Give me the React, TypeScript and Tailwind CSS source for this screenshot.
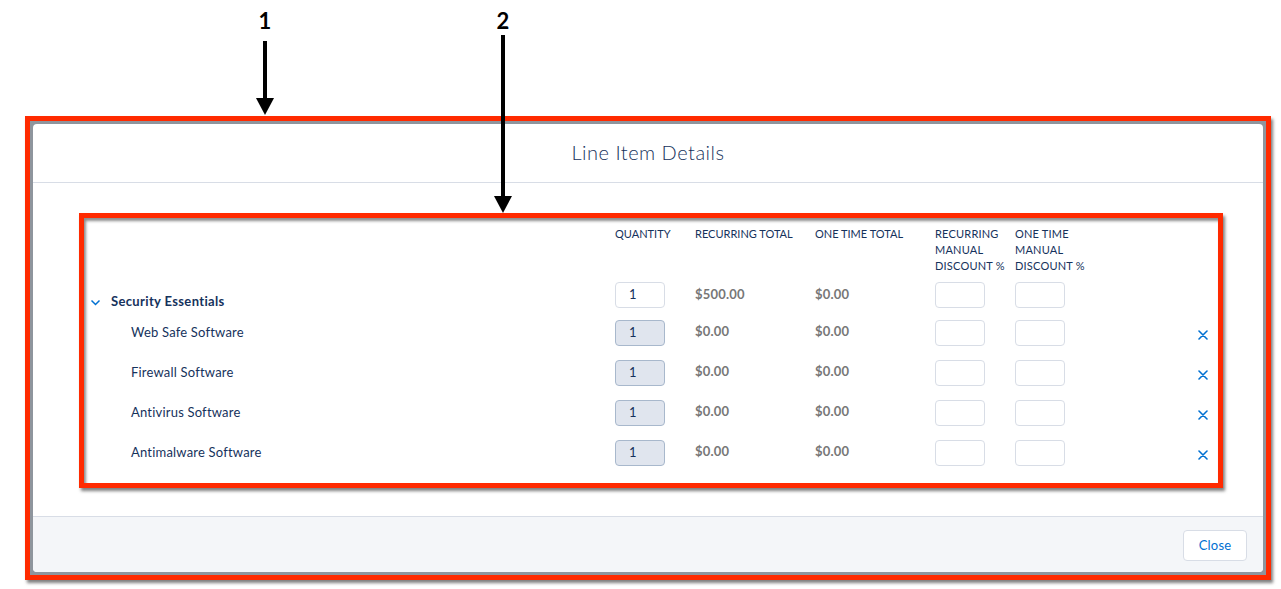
import React from 'react';

const rows = [
  { name: 'Web Safe Software' },
  { name: 'Firewall Software' },
  { name: 'Antivirus Software' },
  { name: 'Antimalware Software' },
];

const Box = ({ children, filled }: { children?: React.ReactNode; filled?: boolean }) => (
  <div
    className={
      filled
        ? 'w-[50px] h-[26px] rounded-[4px] border border-[#a8b8cc] bg-[#e0e5ee] text-[#16325c] text-[13px] pl-[13px] flex items-center'
        : 'w-[50px] h-[26px] rounded-[4px] border border-[#d8dde6] bg-white text-[#16325c] text-[13px] pl-[13px] flex items-center'
    }
  >
    {children}
  </div>
);

const Arrow = ({ height }: { height: number }) => (
  <div className="flex flex-col items-center">
    <div className="w-[4px] bg-black" style={{ height }} />
    <div className="w-0 h-0 border-l-[9px] border-r-[9px] border-t-[17px] border-l-transparent border-r-transparent border-t-black" />
  </div>
);

export default function App() {
  return (
    <div className="relative min-h-[589px] bg-white font-['Lato','Liberation_Sans',sans-serif]">
      {/* Callouts */}
      <div className="absolute left-[256px] top-[9px] w-[18px] flex flex-col items-center">
        <span className="text-[22px] font-bold leading-[24px] text-black">1</span>
        <div className="mt-[8px]">
          <Arrow height={57} />
        </div>
      </div>
      <div className="absolute left-[494px] top-[9px] w-[18px] flex flex-col items-center">
        <span className="text-[22px] font-bold leading-[24px] text-black">2</span>
        <div className="mt-[2px]">
          <Arrow height={161} />
        </div>
      </div>

      <div className="pt-[116px] pl-[25px]">
        <div className="w-[1246px] h-[464px] border-[5px] border-[#ff2a00] bg-[#8e959d] p-[3px] shadow-[2px_3px_3px_rgba(0,0,0,0.5)]">
          <div className="h-full bg-white rounded-[4px] flex flex-col overflow-hidden">
            {/* Header */}
            <div className="h-[59px] border-b border-[#d8dde6] flex items-center justify-center pb-[2px]">
              <h2 className="text-[20px] font-light text-[#16325c] tracking-[0.5px]">Line Item Details</h2>
            </div>

            {/* Body */}
            <div className="flex-1 pt-[30px] pl-[46px]">
              <div className="w-[1144px] h-[275px] border-[5px] border-[#ff2a00] shadow-[2px_3px_3px_rgba(0,0,0,0.5),inset_2px_3px_3px_rgba(0,0,0,0.45)]">
                <div className="pt-[8px] grid grid-cols-[531px_80px_120px_120px_80px_80px_1fr] text-[#16325c]">
                  {/* Column headers */}
                  <div />
                  <div className="text-[11px] leading-[16px] uppercase">Quantity</div>
                  <div className="text-[11px] leading-[16px] uppercase">Recurring Total</div>
                  <div className="text-[11px] leading-[16px] uppercase">One Time Total</div>
                  <div className="text-[11px] leading-[16px] uppercase tracking-[0.2px]">
                    Recurring
                    <br />
                    Manual
                    <br />
                    Discount %
                  </div>
                  <div className="text-[11px] leading-[16px] uppercase whitespace-nowrap tracking-[0.2px]">
                    One Time
                    <br />
                    Manual
                    <br />
                    Discount %
                  </div>
                  <div />

                  {/* Bundle row */}
                  <div className="h-[36px] mt-[3px] flex items-end pb-[3px] pl-[6px] gap-[10px]">
                    <svg width="11" height="18" viewBox="0 0 11 18" className="mb-[-1px]">
                      <polyline points="1.5,7.5 5.5,11.5 9.5,7.5" fill="none" stroke="#0070d2" strokeWidth="1.5" />
                    </svg>
                    <span className="text-[13px] font-bold leading-[18px] tracking-[0.35px]">Security Essentials</span>
                  </div>
                  <div className="h-[36px] mt-[3px] flex items-center">
                    <Box>1</Box>
                  </div>
                  <div className="h-[36px] mt-[3px] flex items-center text-[13px] font-bold text-[#777] tracking-[0.2px]">$500.00</div>
                  <div className="h-[36px] mt-[3px] flex items-center text-[13px] font-bold text-[#777] tracking-[0.2px]">$0.00</div>
                  <div className="h-[36px] mt-[3px] flex items-center">
                    <Box />
                  </div>
                  <div className="h-[36px] mt-[3px] flex items-center">
                    <Box />
                  </div>
                  <div className="h-[36px] mt-[3px]" />

                  {rows.map((r) => (
                    <React.Fragment key={r.name}>
                      <div className="h-[40px] flex items-center pl-[47px] text-[13px] tracking-[0.2px]">{r.name}</div>
                      <div className="h-[40px] flex items-center">
                        <Box filled>1</Box>
                      </div>
                      <div className="h-[40px] flex items-center pb-[2px] text-[13px] font-bold text-[#777] tracking-[0.2px]">$0.00</div>
                      <div className="h-[40px] flex items-center pb-[2px] text-[13px] font-bold text-[#777] tracking-[0.2px]">$0.00</div>
                      <div className="h-[40px] flex items-center">
                        <Box />
                      </div>
                      <div className="h-[40px] flex items-center">
                        <Box />
                      </div>
                      <div className="h-[40px] flex items-center justify-end pr-[10px] pt-[3px]">
                        <svg width="10" height="10" viewBox="0 0 10 10">
                          <path d="M1 1 L9 9 M9 1 L1 9" stroke="#0070d2" strokeWidth="1.6" strokeLinecap="round" />
                        </svg>
                      </div>
                    </React.Fragment>
                  ))}
                </div>
              </div>
            </div>

            {/* Footer */}
            <div className="h-[56px] border-t border-[#d8dde6] bg-[#f4f6f9] flex items-center justify-end pr-[16px]">
              <button className="w-[64px] h-[31px] mt-[2px] rounded-[4px] border border-[#d8dde6] bg-white text-[13px] text-[#0070d2] tracking-[0.2px]">
                Close
              </button>
            </div>
          </div>
        </div>
      </div>
    </div>
  );
}
